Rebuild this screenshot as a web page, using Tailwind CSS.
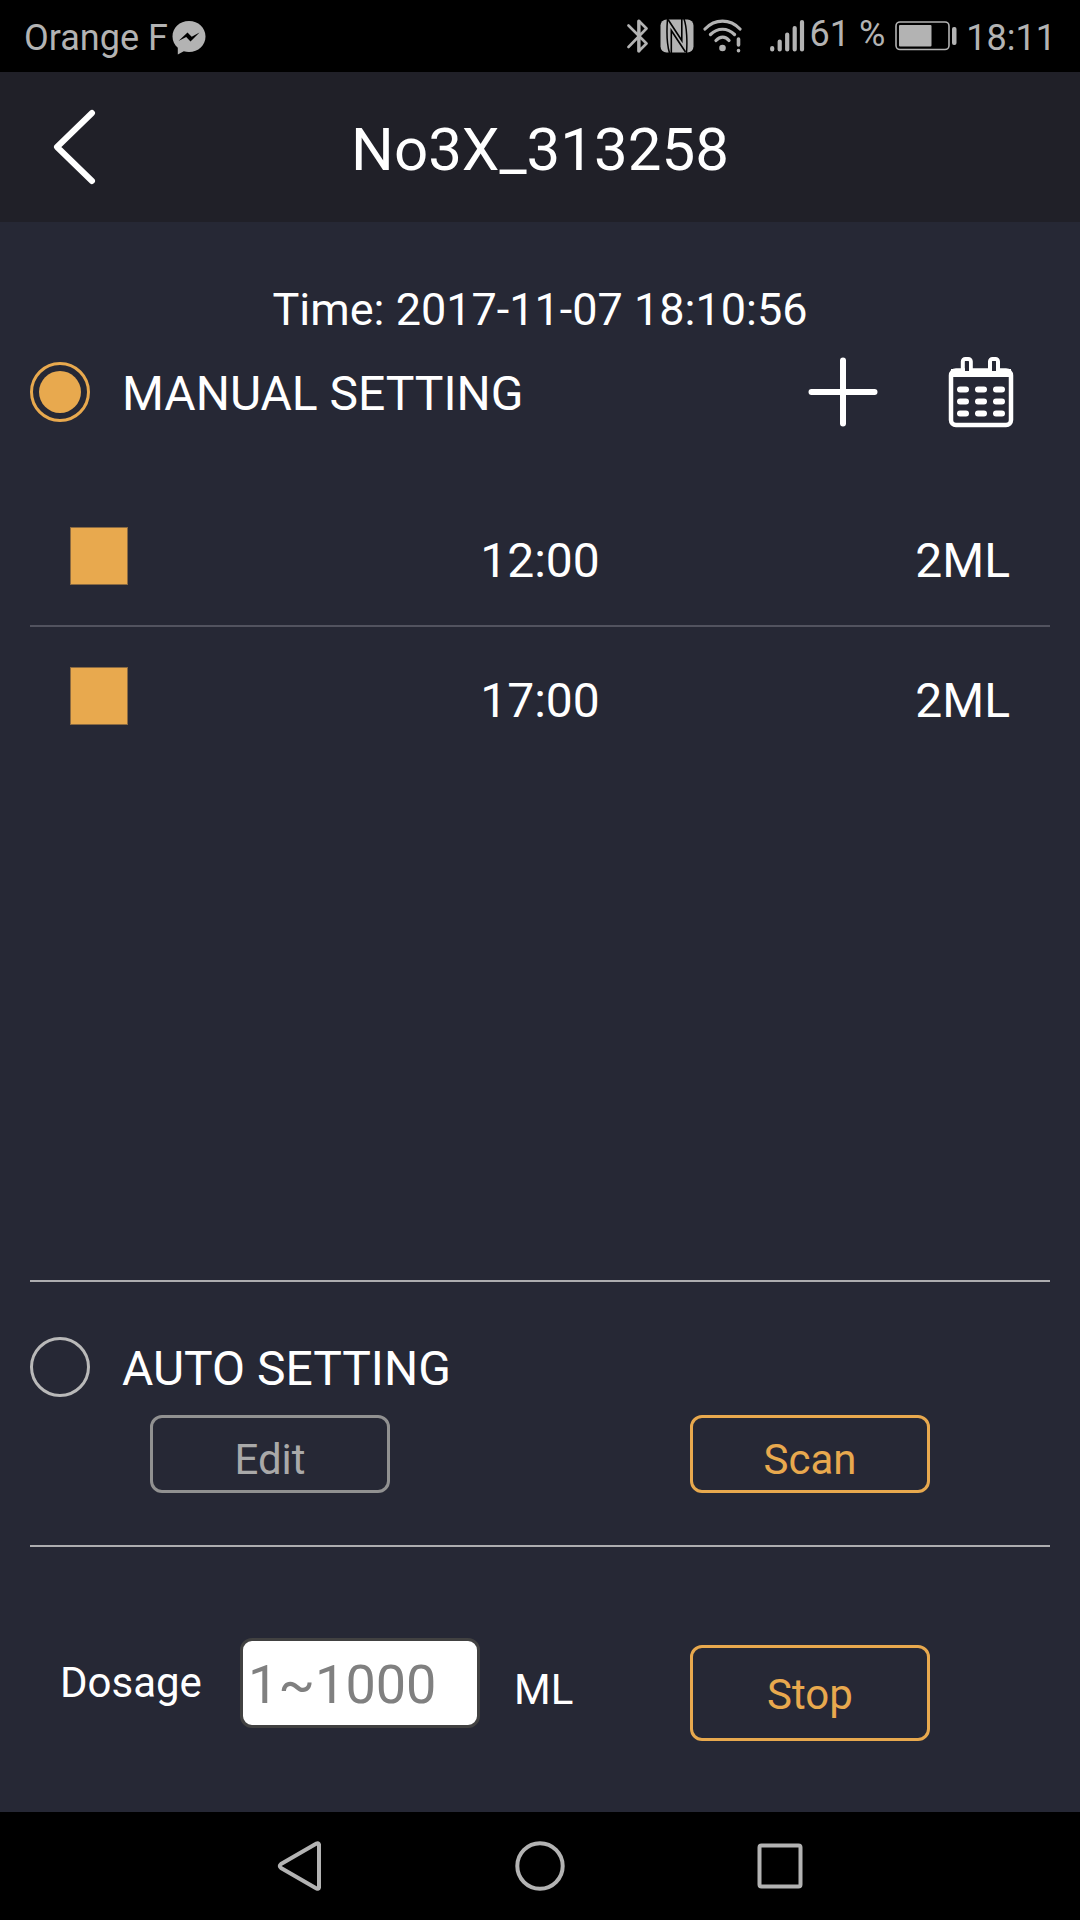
<!DOCTYPE html>
<html lang="en">
<head>
  <meta charset="UTF-8" />
  <meta name="viewport" content="width=device-width, initial-scale=1.0" />
  <title>No3X_313258</title>
  <script src="https://cdn.jsdelivr.net/npm/@tailwindcss/browser@4"></script>
</head>
<body class="bg-[#262835] text-white font-[Roboto,sans-serif] min-h-screen flex flex-col">

  <!-- status bar -->
  <div class="h-[72px] bg-black text-[#b3b3b3] text-[36px] leading-[40px] flex items-center justify-between pl-6 pr-6">
    <div class="flex items-center gap-1 pt-1">
      <span>Orange F</span>
      <svg class="w-[34px] h-[34px]" viewBox="0 0 34 34" fill="#b3b3b3">
        <path d="M17 0C7.600 0 .5 6.800.5 15.500c0 4.700 2 8.500 5.300 11.300V33.500l6-3.200c1.600.5 3.400.7 5.200.7 9.400 0 16.500-6.800 16.500-15.500S26.400 0 17 0z" />
        <path d="M6.500 20l9-8.500 4.200 4.200 7.800-4.200-9 9-4.300-4.400z" fill="#000" />
      </svg>
    </div>
    <div class="flex items-center">
      <svg class="w-[22px] h-[36px]" viewBox="0 0 22 36" fill="none" stroke="#b3b3b3" stroke-width="2.600" stroke-linejoin="round" stroke-linecap="round">
        <path d="M1.500 7.500L19.500 25.500L12 33V3L19.500 10.500L1.500 29" />
        <path d="M11.800 3v30" stroke-width="3.200" />
      </svg>
      <svg class="w-[34px] h-[34px] ml-[11px]" viewBox="0 0 34 34">
        <rect x=".5" y=".5" width="33" height="33" rx="6" fill="#b3b3b3" />
        <path d="M7.500 0C6.800 9 6.800 25 9.500 34M24 0C27 8 27.300 24 26.500 34" fill="none" stroke="#000" stroke-width="1.500" />
        <path d="M11.300 34V11.500L25.500 33M8 .5L21.800 21.500V0" fill="none" stroke="#000" stroke-width="1.600" />
      </svg>
      <svg class="w-[40px] h-[34px] ml-[9px]" viewBox="0 0 40 34" fill="none" stroke="#b3b3b3" stroke-width="3.200" stroke-linecap="round">
        <path d="M2 10C12-.5 27-.5 37 10M7.500 15.500C14.500 8.500 24.500 8.500 31.500 15.500M13 21.500C17 17 22.500 17 26 21.500" />
        <circle cx="19.500" cy="29" r="3.300" fill="#b3b3b3" stroke="none" />
        <path d="M35.500 20v6M35.500 31.500v.2" stroke-width="3.600" />
      </svg>
      <svg class="w-[36px] h-[34px] ml-[26px]" viewBox="0 0 36 34" stroke="#b3b3b3" stroke-width="4.200" stroke-linecap="round">
        <path d="M3.200 29v1.500M10.700 22.500v8M18.200 15.500v15M25.700 9v21.500M33 3v27.500" />
      </svg>
      <span class="ml-[5px] pb-1">61 %</span>
      <svg class="w-[62px] h-[30px] ml-[10px]" viewBox="0 0 62 30" fill="#b3b3b3">
        <rect x="1" y="1" width="53" height="27.500" rx="4" fill="none" stroke="#b3b3b3" stroke-width="1.600" />
        <rect x="4" y="4" width="32.500" height="21.500" rx="1" />
        <rect x="57" y="6" width="4.500" height="18" rx="2" />
      </svg>
      <span class="ml-[9px] pt-1">18:11</span>
    </div>
  </div>

  <header class="h-[150px] bg-[#202028] grid grid-cols-[150px_1fr_150px] items-center">
    <button type="button" aria-label="Back" class="h-full flex items-center justify-center">
      <svg class="w-[44px] h-[76px]" viewBox="0 0 44 76" fill="none" stroke="#fff" stroke-width="6" stroke-linecap="round" stroke-linejoin="round">
        <path d="M39 4L4 38L39 72" />
      </svg>
    </button>
    <h1 class="text-[60px] leading-[80px] text-center pt-1.5">No3X_313258</h1>
  </header>

  <main class="flex-1 flex flex-col">
    <p class="mt-[58px] text-[45px] leading-[60px] text-center">Time: 2017-11-07 18:10:56</p>

    <section class="flex-1 flex flex-col mx-[30px] border-b-2 border-[#adadb0]">
      <div class="h-[104px] flex items-center">
        <input id="manual" name="mode" type="radio" checked class="appearance-none size-[60px] rounded-full border-3 border-[#b9b9b9] p-1.5 bg-clip-content checked:border-[#e8a94e] checked:bg-[#e8a94e]" />
        <label for="manual" class="ml-8 pt-1 text-[48px] leading-[60px]">MANUAL SETTING</label>
        <button type="button" aria-label="Add" class="ml-auto">
          <svg class="size-[70px]" viewBox="0 0 70 70" stroke="#fff" stroke-width="6" stroke-linecap="round">
            <path d="M35 3.500v63M3.500 35h63" />
          </svg>
        </button>
        <button type="button" aria-label="Calendar" class="ml-[70px] mr-[36px]">
          <svg class="w-[66px] h-[72px]" viewBox="0 0 66 72" fill="none" stroke="#fff">
            <rect x="3" y="14.500" width="60" height="54.500" rx="5" stroke-width="4.500" />
            <path d="M3 17h60" stroke-width="8" />
            <path d="M14.800 15V5.500a2.500 2.500 0 0 1 2.500-2.500h3a2.500 2.500 0 0 1 2.500 2.500V15M42 15V5.500a2.500 2.500 0 0 1 2.500-2.500h3a2.500 2.500 0 0 1 2.500 2.500V15" stroke-width="4" />
            <path d="M17 15V5.500h4V15M44 15V5.500h4V15" fill="#262835" stroke="none" />
            <path d="M12 33.500h6M30 33.500h6M48 33.500h6M12 45.500h6M30 45.500h6M48 45.500h6M12 57.500h6M30 57.500h6M48 57.500h6" stroke-width="6" stroke-linecap="round" />
          </svg>
        </button>
      </div>

      <ul class="mt-[43px] text-[48px] leading-[60px]">
        <li class="h-[140px] px-10 grid grid-cols-3 items-center border-b-2 border-[#52535f]">
          <input type="checkbox" checked aria-label="12:00" class="appearance-none size-[58px] border border-[#262835] checked:bg-[#e8a94e] checked:border-[#8a6a42]" />
          <span class="pt-2.5 text-center">12:00</span>
          <span class="pt-2.5 text-right">2ML</span>
        </li>
        <li class="h-[140px] px-10 grid grid-cols-3 items-center border-b-2 border-transparent">
          <input type="checkbox" checked aria-label="17:00" class="appearance-none size-[58px] border border-[#262835] checked:bg-[#e8a94e] checked:border-[#8a6a42]" />
          <span class="pt-2.5 text-center">17:00</span>
          <span class="pt-2.5 text-right">2ML</span>
        </li>
      </ul>
    </section>

    <section class="mx-[30px] pt-[55px] pb-[52px] border-b-2 border-[#adadb0]">
      <div class="flex items-center">
        <input id="auto" name="mode" type="radio" class="appearance-none size-[60px] rounded-full border-3 border-[#b9b9b9] p-1.5 bg-clip-content checked:border-[#e8a94e] checked:bg-[#e8a94e]" />
        <label for="auto" class="ml-8 pt-1 text-[48px] leading-[56px]">AUTO SETTING</label>
      </div>
      <div class="mt-[18px] -mx-[30px] grid grid-cols-2 justify-items-center text-[42px] leading-[50px]">
        <button type="button" class="w-[240px] h-[78px] pt-3 rounded-xl border-3 border-[#919191] text-[#a9a9a9]">Edit</button>
        <button type="button" class="w-[240px] h-[78px] pt-3 rounded-xl border-3 border-[#e8a94e] text-[#e8a94e]">Scan</button>
      </div>
    </section>

    <section class="h-[265px] grid grid-cols-2 text-[42px] leading-[50px]">
      <div class="flex items-center pl-[60px] pt-1.5">
        <label for="dosage" class="w-[180px] shrink-0">Dosage</label>
        <input id="dosage" type="text" inputmode="numeric" placeholder="1~1000" class="w-[240px] h-[90px] shrink-0 px-[5px] pt-1 rounded-xl border-3 border-[#414141] bg-white text-black text-[54px] placeholder:text-[#808080]" />
        <label for="dosage" class="ml-[34px] pt-3.5">ML</label>
      </div>
      <div class="flex items-center justify-center pt-[26px]">
        <button type="button" class="w-[240px] h-[96px] pt-1 rounded-xl border-3 border-[#e8a94e] text-[#e8a94e]">Stop</button>
      </div>
    </section>
  </main>

  <!-- android navigation -->
  <nav class="h-[108px] bg-black flex items-center justify-center">
    <button type="button" aria-label="Back" class="w-[240px] flex justify-center">
      <svg class="size-[50px]" viewBox="0 0 50 50" fill="none" stroke="#b3b3b3" stroke-width="4" stroke-linejoin="round">
        <path d="M44 3.500V46.500Q43.500 48.500 41.500 47.500L6 27Q3.500 25 6 23L41.500 2.500Q43.500 1.500 44 3.500z" />
      </svg>
    </button>
    <button type="button" aria-label="Home" class="w-[240px] flex justify-center">
      <svg class="size-[50px]" viewBox="0 0 50 50" fill="none" stroke="#b3b3b3" stroke-width="4">
        <circle cx="25" cy="25" r="22.700" />
      </svg>
    </button>
    <button type="button" aria-label="Recent apps" class="w-[240px] flex justify-center">
      <svg class="size-[50px]" viewBox="0 0 50 50" fill="none" stroke="#b3b3b3" stroke-width="4">
        <rect x="4.500" y="4.500" width="41" height="41" rx="2" />
      </svg>
    </button>
  </nav>

</body>
</html>
